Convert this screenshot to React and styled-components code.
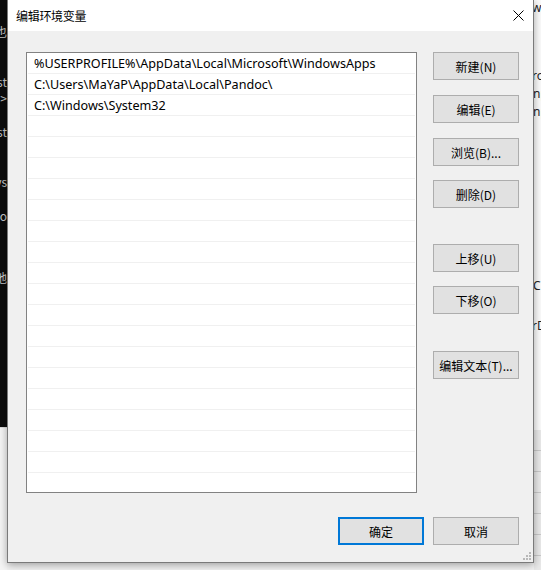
import React from "react";
import styled, { createGlobalStyle } from "styled-components";

const Global = createGlobalStyle`
  html, body {
    margin: 0;
    padding: 0;
    background: #f3f3f3;
  }
  body {
    font-family: "Noto Sans", "Noto Sans CJK SC", sans-serif;
  }
`;

const UI_FONT = `"Noto Sans CJK SC", "Noto Sans", sans-serif`;

const Desktop = styled.div`
  display: flex;
  width: 541px;
  height: 570px;
  overflow: hidden;
  background: #f3f3f3;
`;

const LeftStrip = styled.div`
  width: 7px;
  flex: none;
  display: flex;
  flex-direction: column;
`;

const Terminal = styled.div`
  height: 427px;
  background: #0c0c0c;
  overflow: hidden;
  display: flex;
  flex-direction: column;
  align-items: flex-end;
  color: #c8c8c8;
  font-family: "Noto Sans CJK SC", sans-serif;
  font-size: 12px;
  line-height: 1;
`;

const TermFrag = styled.span`
  margin-top: ${(p) => p.$top}px;
  white-space: nowrap;
`;

const LeftBelow = styled.div`
  flex: 1;
  background: #f5f5f5;
  border-top: 1px solid #dcdcdc;
`;

const RightStrip = styled.div`
  flex: 1;
  background: #fbfbfb;
  overflow: hidden;
  display: flex;
  flex-direction: column;
  font-family: "Noto Sans", sans-serif;
  font-size: 12px;
  line-height: 1;
  color: #222;
`;

const RightFrag = styled.span`
  margin-top: ${(p) => p.$top}px;
  white-space: nowrap;
  margin-left: ${(p) => p.$shift || 0}px;
`;

const RightTable = styled.div`
  margin-top: auto;
  height: 140px;
  background: repeating-linear-gradient(
    to bottom,
    #e9e9e9 0,
    #e9e9e9 20px,
    #c9c9c9 20px,
    #c9c9c9 21px
  );
`;

const DialogColumn = styled.div`
  width: 527px;
  flex: none;
`;

const Dialog = styled.div`
  position: relative;
  height: 562px;
  background: #f0f0f0;
  border: 1px solid #7a7a7a;
  border-top: none;
  box-shadow: 0 2px 8px rgba(0, 0, 0, 0.35);
  display: flex;
  flex-direction: column;
  font-family: ${UI_FONT};
`;

const TitleBar = styled.div`
  height: 31px;
  background: #ffffff;
  display: flex;
  align-items: center;
  justify-content: space-between;
  padding: 0 9px 0 8px;
  flex: none;
`;

const Title = styled.span`
  font-size: 12px;
  color: #000;
  letter-spacing: -0.3px;
`;

const Close = styled.svg`
  width: 11px;
  height: 11px;
`;

const Body = styled.div`
  flex: 1;
  display: flex;
  flex-direction: column;
  padding: 21px 14px 0 18px;
`;

const Main = styled.div`
  display: flex;
  gap: 16px;
`;

const ListBox = styled.div`
  width: 389px;
  height: 439px;
  border: 1px solid #828282;
  background: #ffffff;
  overflow: hidden;
  padding: 0 1px;
`;

const Row = styled.div`
  height: 20px;
  border-bottom: 1px solid #f0f0f0;
  display: flex;
  align-items: center;
  padding: 1px 0 0 6px;
  box-sizing: border-box;
  height: 21px;
  font-family: "Noto Sans", "Noto Sans CJK SC", sans-serif;
  font-size: 12.6px;
  color: #000;
  white-space: nowrap;
`;

const ButtonColumn = styled.div`
  display: flex;
  flex-direction: column;
`;

const Button = styled.button`
  width: 86px;
  height: 28px;
  margin-top: ${(p) => p.$gap || 0}px;
  background: #e1e1e1;
  border: ${(p) => (p.$primary ? "2px solid #0078d7" : "1px solid #adadad")};
  font-family: ${UI_FONT};
  font-size: 12px;
  color: #000;
  padding: 0;
  display: flex;
  align-items: center;
  justify-content: center;
  flex: none;
`;

const Footer = styled.div`
  display: flex;
  justify-content: flex-end;
  gap: 9px;
  margin-top: 24px;
`;

const Grip = styled.svg`
  position: absolute;
  right: 1px;
  bottom: 1px;
  width: 10px;
  height: 10px;
`;

const paths = [
  "%USERPROFILE%\\AppData\\Local\\Microsoft\\WindowsApps",
  "C:\\Users\\MaYaP\\AppData\\Local\\Pandoc\\",
  "C:\\Windows\\System32",
];

const sideButtons = [
  { label: "新建(N)", gap: 0 },
  { label: "编辑(E)", gap: 15 },
  { label: "浏览(B)...", gap: 15 },
  { label: "删除(D)", gap: 14 },
  { label: "上移(U)", gap: 36 },
  { label: "下移(O)", gap: 14 },
  { label: "编辑文本(T)...", gap: 37 },
];

export default function App() {
  const rows = Array.from({ length: 21 }, (_, i) => paths[i] || "");
  return (
    <>
      <Global />
      <Desktop>
        <LeftStrip>
          <Terminal>
            <TermFrag $top={26}>也</TermFrag>
            <TermFrag $top={38}>st</TermFrag>
            <TermFrag $top={4}>&gt;</TermFrag>
            <TermFrag $top={22}>st</TermFrag>
            <TermFrag $top={38}>ys</TermFrag>
            <TermFrag $top={22}>no</TermFrag>
            <TermFrag $top={50}>地</TermFrag>
          </Terminal>
          <LeftBelow />
        </LeftStrip>
        <DialogColumn>
          <Dialog>
            <TitleBar>
              <Title>编辑环境变量</Title>
              <Close viewBox="0 0 11 11">
                <path d="M0.5 0.5 L10.5 10.5 M10.5 0.5 L0.5 10.5" stroke="#000" strokeWidth="1" fill="none" />
              </Close>
            </TitleBar>
            <Body>
              <Main>
                <ListBox>
                  {rows.map((r, i) => (
                    <Row key={i}>{r}</Row>
                  ))}
                </ListBox>
                <ButtonColumn>
                  {sideButtons.map((b) => (
                    <Button key={b.label} $gap={b.gap}>
                      {b.label}
                    </Button>
                  ))}
                </ButtonColumn>
              </Main>
              <Footer>
                <Button $primary>确定</Button>
                <Button>取消</Button>
              </Footer>
            </Body>
            <Grip viewBox="0 0 10 10">
              {[
                [7, 1],
                [4, 4],
                [7, 4],
                [1, 7],
                [4, 7],
                [7, 7],
              ].map(([x, y]) => (
                <rect key={`${x}-${y}`} x={x} y={y} width="2" height="2" fill="#b8b8b8" />
              ))}
            </Grip>
          </Dialog>
        </DialogColumn>
        <RightStrip>
          <RightFrag $top={2} $shift={-2}>w</RightFrag>
          <RightFrag $top={56} $shift={-2}>ro</RightFrag>
          <RightFrag $top={6} $shift={-1}>np</RightFrag>
          <RightFrag $top={6} $shift={-1}>np</RightFrag>
          <RightFrag $top={162} $shift={-1}>C</RightFrag>
          <RightFrag $top={28} $shift={-2}>rD</RightFrag>
          <RightTable />
        </RightStrip>
      </Desktop>
    </>
  );
}
